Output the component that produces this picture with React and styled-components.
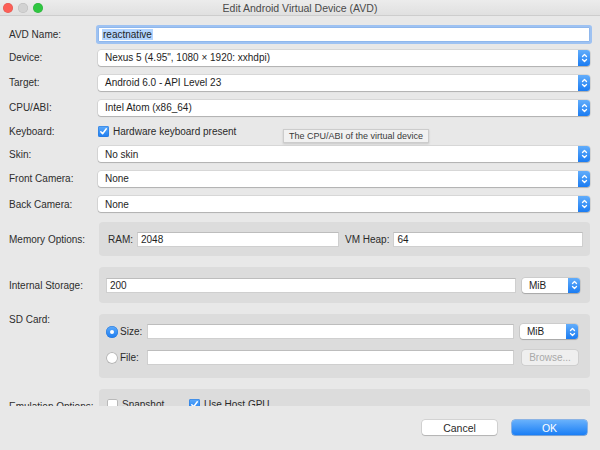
import React from "react";
import styled, { createGlobalStyle } from "styled-components";

const GlobalStyle = createGlobalStyle`
  html, body { margin: 0; padding: 0; background: #e8e8e8; }
  * { box-sizing: border-box; }
`;

const Window = styled.div`
  position: relative;
  width: 600px;
  height: 450px;
  background: #e8e8e8;
  display: flex;
  flex-direction: column;
  overflow: hidden;
  font-family: "Liberation Sans", Arial, sans-serif;
  font-size: 10px;
  color: #2a2a2a;
`;

const TitleBar = styled.div`
  flex: none;
  height: 16px;
  display: grid;
  grid-template-columns: 1fr auto 1fr;
  align-items: center;
  background: linear-gradient(#ececec, #e0e0e0);
  border-bottom: 1px solid #cdcdcd;
`;

const Lights = styled.div`
  display: flex;
  gap: 5px;
  padding-left: 3px;
`;

const Light = styled.span`
  width: 10px;
  height: 10px;
  border-radius: 50%;
  background: ${p => p.$c};
  box-shadow: inset 0 0 0 0.5px rgba(0, 0, 0, 0.12);
`;

const Title = styled.div`
  font-size: 10.5px;
  color: #4a4a4a;
`;

const Content = styled.div`
  flex: 1;
  overflow: hidden;
  padding: 8px 10px 0 9px;
`;

const Row = styled.div`
  display: grid;
  grid-template-columns: 89px 1fr;
  align-items: ${p => (p.$top ? "start" : "center")};
  height: ${p => p.$h}px;
  margin-top: ${p => p.$mt || 0}px;
`;

const Label = styled.div`
  color: #2d2d2d;
  white-space: nowrap;
`;

const TextInput = styled.div`
  height: ${p => p.$h || 15}px;
  background: #fff;
  border: 1px solid #cfcfcf;
  border-top-color: #bdbdbd;
  display: flex;
  align-items: center;
  padding-left: 3px;
  color: #1e1e1e;
  white-space: nowrap;
  overflow: hidden;
  ${p =>
    p.$focus &&
    `
    border-color: #8fb7ec;
    box-shadow: 0 0 0 2px #9ec2f2;
    border-radius: 1px;
  `}
`;

const Selected = styled.span`
  background: #b4d5fe;
  padding: 0 1px;
`;

const SelectBox = styled.div`
  height: ${p => p.$h || 16}px;
  background: #fff;
  border-radius: 3px;
  box-shadow: 0 0 0 0.5px rgba(0, 0, 0, 0.14), 0 1px 1px rgba(0, 0, 0, 0.18);
  display: flex;
  align-items: center;
  justify-content: space-between;
  padding-left: 7px;
  color: #1e1e1e;
  white-space: nowrap;
`;

const Stepper = styled.span`
  align-self: stretch;
  width: 12px;
  border-radius: 0 3px 3px 0;
  background: linear-gradient(#62adfb, #1b7cf2);
  display: flex;
  align-items: center;
  justify-content: center;
`;

const Check = styled.span`
  flex: none;
  width: 11px;
  height: 11px;
  border-radius: 2px;
  display: flex;
  align-items: center;
  justify-content: center;
  background: ${p => (p.$on ? "linear-gradient(#5eabfb, #1c7cf0)" : "#fff")};
  box-shadow: ${p =>
    p.$on ? "inset 0 0 0 0.5px #2a78d8" : "inset 0 0 0 1px #b9b9b9"};
`;

const Radio = styled.span`
  flex: none;
  width: 12px;
  height: 12px;
  border-radius: 50%;
  display: flex;
  align-items: center;
  justify-content: center;
  background: ${p => (p.$on ? "linear-gradient(#5eabfb, #1c7cf0)" : "#fff")};
  box-shadow: ${p =>
    p.$on ? "inset 0 0 0 0.5px #2a78d8" : "inset 0 0 0 1px #b5b5b5"};
  &::after {
    content: "";
    display: ${p => (p.$on ? "block" : "none")};
    width: 4px;
    height: 4px;
    border-radius: 50%;
    background: #fff;
  }
`;

const Option = styled.label`
  display: flex;
  align-items: center;
  gap: ${p => p.$gap || 4}px;
  color: #2a2a2a;
  white-space: nowrap;
`;

const Group = styled.div`
  height: 100%;
  margin-left: 1px;
  background: #dcdcdc;
  border-radius: 4px;
`;

const MemoryGroup = styled(Group)`
  display: grid;
  grid-template-columns: auto 202px auto 1fr;
  align-items: center;
  column-gap: 4px;
  padding: 0 7px 0 9px;
  & > :nth-child(3) { margin-left: 2px; }
`;

const StorageGroup = styled(Group)`
  display: grid;
  grid-template-columns: 1fr 58px;
  align-items: center;
  column-gap: 6px;
  padding: 0 10px 0 7px;
`;

const SdGroup = styled(Group)`
  display: flex;
  flex-direction: column;
  gap: 11px;
  padding: 10px 12px 0 7px;
`;

const SdRow = styled.div`
  display: grid;
  grid-template-columns: 35px 1fr 58px;
  align-items: center;
  column-gap: 6px;
`;

const EmuGroup = styled(Group)`
  display: flex;
  align-items: flex-start;
  padding: 10px 8px 0 8px;
  & > :first-child { width: 82px; }
`;

const Browse = styled.div`
  height: 15px;
  width: 56px;
  justify-self: end;
  border-radius: 3px;
  background: #efefef;
  box-shadow: 0 0 0 0.5px rgba(0, 0, 0, 0.12);
  color: #a9a9a9;
  display: flex;
  align-items: center;
  justify-content: center;
`;

const Tooltip = styled.div`
  position: absolute;
  left: 283px;
  top: 129px;
  height: 14px;
  padding: 0 5px;
  display: flex;
  align-items: center;
  background: #f1f1f1;
  border: 1px solid #cccccc;
  box-shadow: 0 1px 2px rgba(0, 0, 0, 0.15);
  font-size: 9px;
  color: #3a3a3a;
  white-space: nowrap;
`;

const Footer = styled.div`
  flex: none;
  height: 44px;
  display: flex;
  justify-content: flex-end;
  align-items: flex-start;
  gap: 15px;
  padding: 14px 13px 0 0;
`;

const Button = styled.div`
  width: 75px;
  height: 15px;
  border-radius: 3px;
  display: flex;
  align-items: center;
  justify-content: center;
  font-size: 10.5px;
  color: ${p => (p.$primary ? "#fff" : "#2a2a2a")};
  background: ${p =>
    p.$primary ? "linear-gradient(#68b1fc, #1a7ef5)" : "#fff"};
  box-shadow: ${p =>
    p.$primary
      ? "0 0 0 0.5px #2f7fe0, 0 1px 1px rgba(0,0,0,0.15)"
      : "0 0 0 0.5px rgba(0,0,0,0.18), 0 1px 1px rgba(0,0,0,0.15)"};
`;

const Chevrons = () => (
  <svg width="7" height="12" viewBox="0 0 7 12">
    <path
      d="M1.5 4.5 L3.5 2.5 L5.5 4.5 M1.5 7.5 L3.5 9.5 L5.5 7.5"
      fill="none"
      stroke="#fff"
      strokeWidth="1.3"
      strokeLinecap="round"
      strokeLinejoin="round"
    />
  </svg>
);

const Tick = () => (
  <svg width="9" height="9" viewBox="0 0 9 9">
    <path
      d="M1.8 4.8 L3.6 6.8 L7.3 1.8"
      fill="none"
      stroke="#fff"
      strokeWidth="1.5"
      strokeLinecap="round"
      strokeLinejoin="round"
    />
  </svg>
);

const Select = ({ value, h }) => (
  <SelectBox $h={h}>
    <span>{value}</span>
    <Stepper>
      <Chevrons />
    </Stepper>
  </SelectBox>
);

const selectRows = [
  { label: "Device:", value: "Nexus 5 (4.95\", 1080 × 1920: xxhdpi)", h: 25 },
  { label: "Target:", value: "Android 6.0 - API Level 23", h: 25 },
  { label: "CPU/ABI:", value: "Intel Atom (x86_64)", h: 25 }
];

const cameraRows = [
  { label: "Skin:", value: "No skin", h: 24 },
  { label: "Front Camera:", value: "None", h: 25 },
  { label: "Back Camera:", value: "None", h: 26 }
];

export default function App() {
  return (
    <Window>
      <GlobalStyle />
      <TitleBar>
        <Lights>
          <Light $c="#fc5f57" />
          <Light $c="#d2d2d2" />
          <Light $c="#2fc641" />
        </Lights>
        <Title>Edit Android Virtual Device (AVD)</Title>
        <span />
      </TitleBar>

      <Content>
        <Row $h={21}>
          <Label>AVD Name:</Label>
          <TextInput $focus>
            <Selected>reactnative</Selected>
          </TextInput>
        </Row>

        {selectRows.map(r => (
          <Row key={r.label} $h={r.h}>
            <Label>{r.label}</Label>
            <Select value={r.value} />
          </Row>
        ))}

        <Row $h={22}>
          <Label>Keyboard:</Label>
          <Option>
            <Check $on>
              <Tick />
            </Check>
            Hardware keyboard present
          </Option>
        </Row>

        {cameraRows.map(r => (
          <Row key={r.label} $h={r.h}>
            <Label>{r.label}</Label>
            <Select value={r.value} />
          </Row>
        ))}

        <Row $h={34} $mt={5}>
          <Label>Memory Options:</Label>
          <MemoryGroup>
            <span>RAM:</span>
            <TextInput>2048</TextInput>
            <span>VM Heap:</span>
            <TextInput>64</TextInput>
          </MemoryGroup>
        </Row>

        <Row $h={36} $mt={11}>
          <Label>Internal Storage:</Label>
          <StorageGroup>
            <TextInput>200</TextInput>
            <Select value="MiB" h={15} />
          </StorageGroup>
        </Row>

        <Row $h={64} $mt={11} $top>
          <Label>SD Card:</Label>
          <SdGroup>
            <SdRow>
              <Option $gap={2}>
                <Radio $on />
                Size:
              </Option>
              <TextInput />
              <Select value="MiB" h={15} />
            </SdRow>
            <SdRow>
              <Option $gap={2}>
                <Radio />
                File:
              </Option>
              <TextInput />
              <Browse>Browse...</Browse>
            </SdRow>
          </SdGroup>
        </Row>

        <Row $h={34} $mt={11}>
          <Label>Emulation Options:</Label>
          <EmuGroup>
            <Option>
              <Check />
              Snapshot
            </Option>
            <Option>
              <Check $on>
                <Tick />
              </Check>
              Use Host GPU
            </Option>
          </EmuGroup>
        </Row>
      </Content>

      <Footer>
        <Button>Cancel</Button>
        <Button $primary>OK</Button>
      </Footer>

      <Tooltip>The CPU/ABI of the virtual device</Tooltip>
    </Window>
  );
}
